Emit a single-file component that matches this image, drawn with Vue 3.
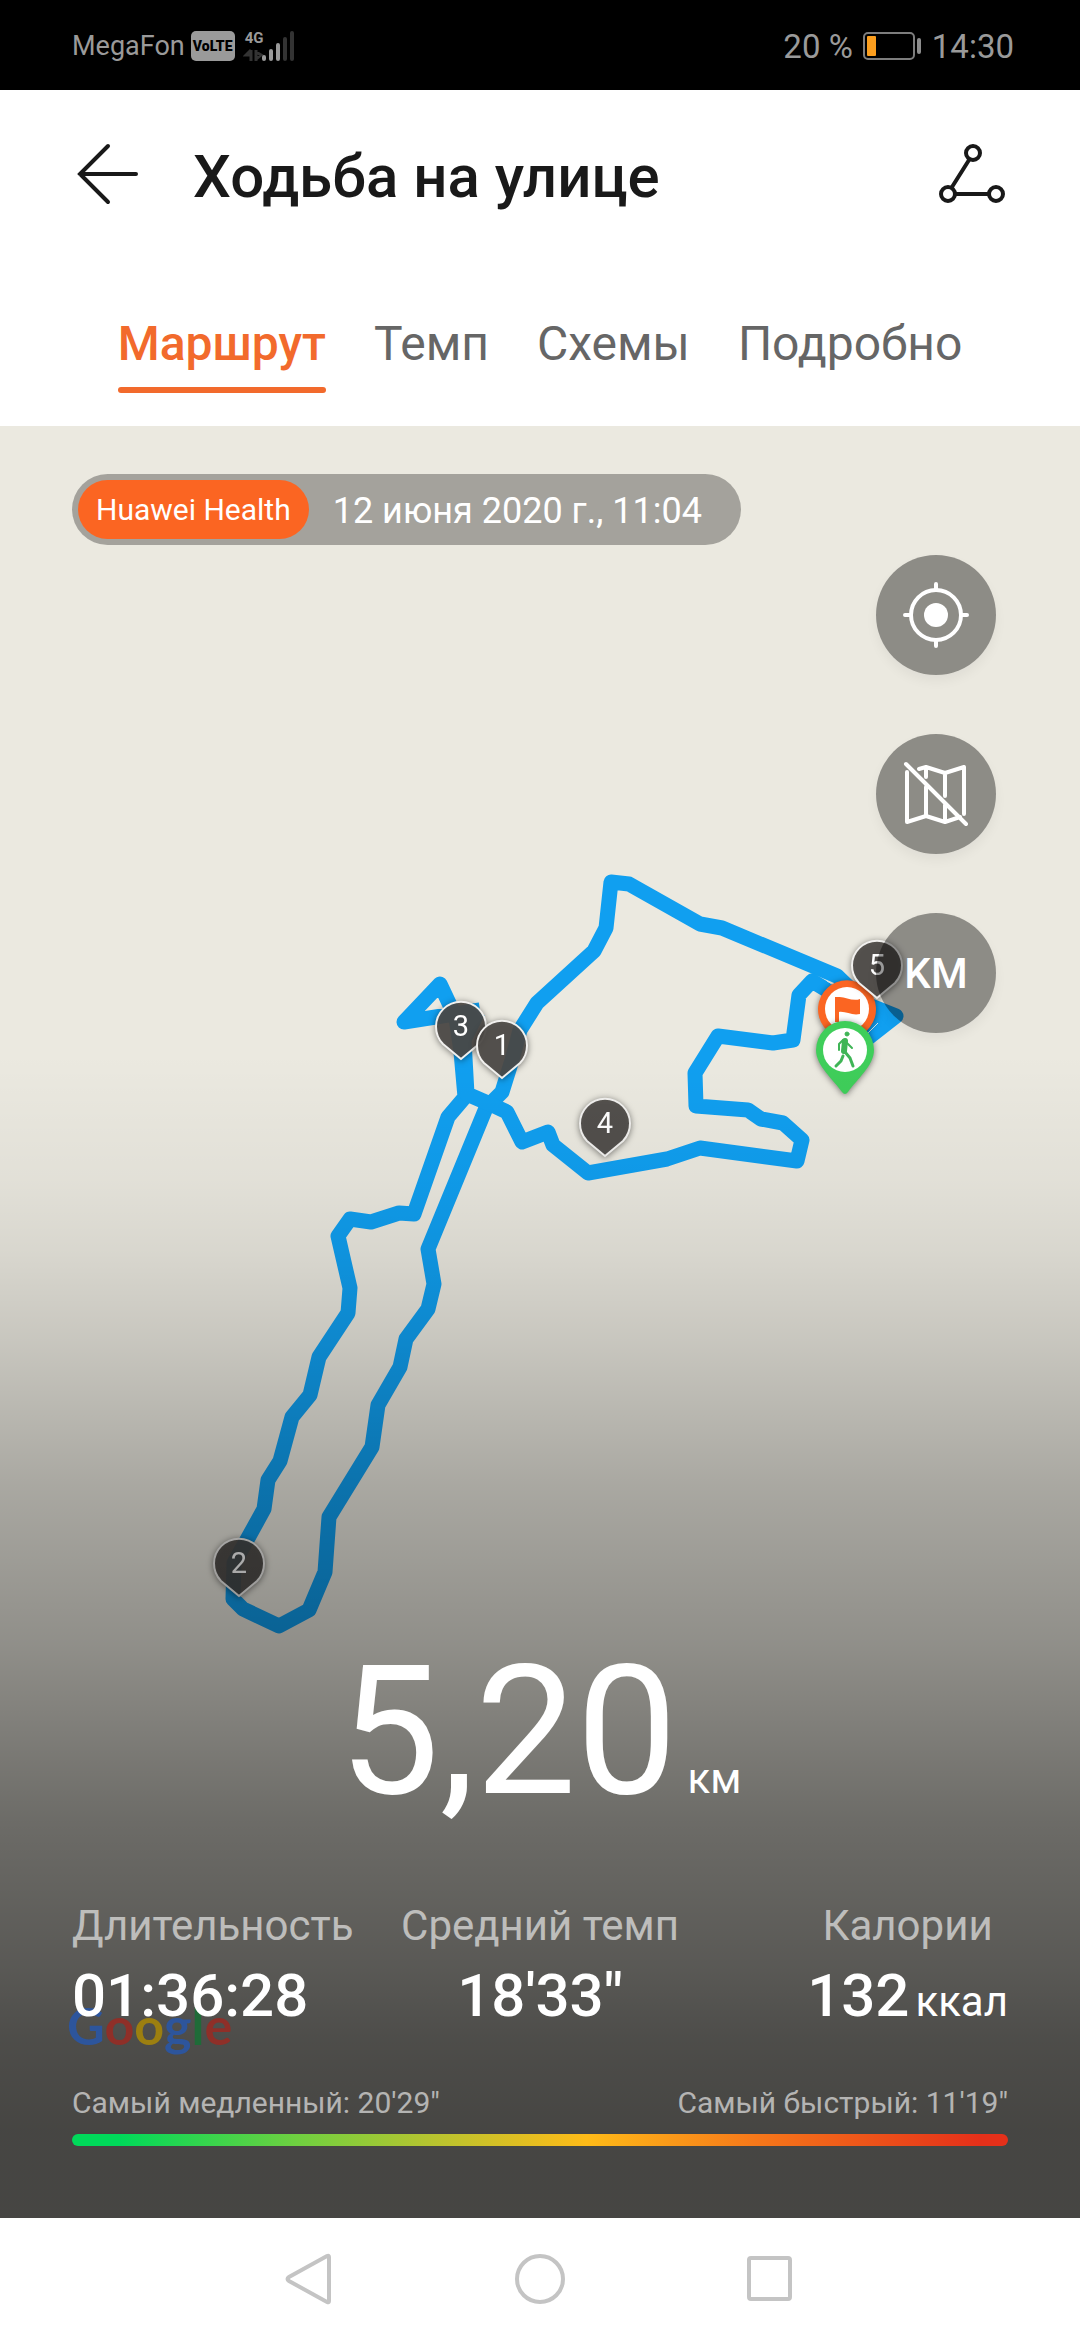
<template>
  <div class="page">
    <!-- status bar -->
    <div class="status-bar">
      <div class="status-left">
        <span class="carrier">MegaFon</span>
        <span class="volte">VoLTE</span>
        <div class="network">
          <span class="network-type">4G</span>
          <svg class="signal" width="52" height="32" viewBox="0 0 52 32">
            <path d="M8 20v11M8 20l-5 5h5M13 20v11M13 29l5-4-5-3" stroke="#333" stroke-width="3" fill="none" />
            <g stroke-width="4" stroke-linecap="round">
              <path d="M21 27v2M28 21v8M35 15v14" stroke="#9a9a9a" />
              <path d="M42 9v20M49 3v26" stroke="#333" />
            </g>
          </svg>
        </div>
      </div>
      <div class="status-right">
        <span>20 %</span>
        <svg width="59" height="28" viewBox="0 0 59 28">
          <rect x="1" y="1" width="50" height="26" rx="4" fill="none" stroke="#7d7d7d" stroke-width="2" />
          <rect x="4" y="4" width="9" height="20" rx="1" fill="#fb9e1e" />
          <rect x="54" y="6" width="4" height="16" rx="2" fill="#8d8d8d" />
        </svg>
        <span>14:30</span>
      </div>
    </div>

    <!-- header -->
    <header class="header">
      <button class="icon-button" type="button" aria-label="Назад">
        <svg width="62" height="62" viewBox="0 0 62 62" class="line-icon">
          <path d="M31 3L3 31L31 59M3 31H59" />
        </svg>
      </button>
      <h1 class="title">Ходьба на улице</h1>
      <button class="icon-button" type="button" aria-label="Поделиться">
        <svg width="68" height="62" viewBox="0 0 68 62" class="line-icon">
          <circle cx="35" cy="10" r="7" />
          <circle cx="10" cy="51" r="7" />
          <circle cx="58" cy="51" r="7" />
          <path d="M31 17L14 44M17 51H51" />
        </svg>
      </button>
    </header>

    <nav class="tabs" role="tablist">
      <button
        v-for="tab in tabs"
        :key="tab"
        class="tab"
        :class="{ active: tab === activeTab }"
        type="button"
        role="tab"
        :aria-selected="tab === activeTab"
        @click="activeTab = tab"
      >
        {{ tab }}
      </button>
    </nav>

    <main class="map">
      <svg class="map-canvas" viewBox="0 426 1080 1792" preserveAspectRatio="xMidYMin slice">
        <g class="route">
          <polyline v-for="(line, i) in route" :key="i" :points="line" />
        </g>
        <path d="M827 981L832 984M868 1033L878 1023" stroke="#dcecf0" stroke-width="1" />

        <!-- finish -->
        <g class="pin" transform="translate(847 1053)">
          <path d="M0 0L-23 -26A29 29 0 1 1 23 -26Z" fill="#fb6522" />
          <circle cx="0" cy="-44" r="22" fill="#fff" />
          <path d="M-12 -56h3c7-1 14 5 22 2v15c-8 2-14-3-21-2v10h-4z" fill="#fb6522" />
        </g>

        <g v-for="pin in kmPins" :key="pin.km" class="pin" :transform="`translate(${pin.x} ${pin.y})`">
          <path d="M0 -1L-18 -16A25 25 0 1 1 18 -16Z" class="km-pin" />
          <text x="0" y="-24" class="km-label">{{ pin.km }}</text>
        </g>

        <!-- start -->
        <g class="pin" transform="translate(845 1094)">
          <path d="M-3 -2C-11 -14 -29 -28 -29 -44A29 29 0 1 1 29 -44C29 -28 11 -14 3 -2Q0 2 -3 -2Z" fill="#3fce5a" />
          <circle cx="0" cy="-44" r="22" fill="#fff" />
          <g stroke="#3fb556" fill="none" stroke-linecap="round" stroke-linejoin="round">
            <circle cx="2" cy="-60" r="2" fill="#3fb556" stroke-width="1" />
            <path d="M0 -53L-1 -43" stroke-width="6" />
            <path d="M-2 -54L-6 -50V-44M2 -51L7 -46" stroke-width="2" />
            <path d="M0 -42L5 -36L8 -28M-2 -38L-4 -33L-9 -28" stroke-width="3" />
          </g>
        </g>
      </svg>
      <div class="scrim"></div>

      <div class="source">
        <span class="source-name">Huawei Health</span>
        <time class="source-date" datetime="2020-06-12T11:04">12 июня 2020 г., 11:04</time>
      </div>

      <div class="map-tools">
        <button class="tool" type="button" aria-label="Моё местоположение">
          <svg width="120" height="120" viewBox="0 0 120 120" class="tool-icon">
            <circle cx="60" cy="60" r="25" />
            <path d="M60 29v6M60 85v6M29 60h6M85 60h6" />
            <circle cx="60" cy="60" r="12" class="dot" />
          </svg>
        </button>
        <button class="tool" type="button" aria-label="Скрыть карту">
          <svg width="120" height="120" viewBox="0 0 120 120" class="tool-icon">
            <path d="M31 38V88L50 82L69 88L84 83M43 35L50 33L69 39L88 33V80M50 33V43M50 53V82M69 39V62M69 71V88M30 30L90 90" />
          </svg>
        </button>
        <button class="tool" type="button">KM</button>
      </div>

      <section class="summary">
        <div class="distance">
          <span class="distance-value">5,20</span>
          <span class="unit">км</span>
        </div>

        <div class="stats">
          <div class="stat">
            <span class="stat-label">Длительность</span>
            <span class="stat-value">01:36:28</span>
            <svg class="google" width="190" height="70" viewBox="0 0 190 70" aria-label="Google">
              <text x="0" y="50"><tspan v-for="(l, i) in logo" :key="i" :fill="l.color">{{ l.char }}</tspan></text>
            </svg>
          </div>
          <div class="stat">
            <span class="stat-label">Средний темп</span>
            <span class="stat-value">18'33"</span>
          </div>
          <div class="stat">
            <span class="stat-label">Калории</span>
            <span class="stat-value">132<span class="unit">ккал</span></span>
          </div>
        </div>

        <div class="pace-range">
          <span>Самый медленный: 20'29"</span>
          <span>Самый быстрый: 11'19"</span>
        </div>
        <div class="pace-bar"></div>
      </section>
    </main>

    <!-- system navigation -->
    <footer class="nav-bar">
      <button class="nav-button" type="button" aria-label="Назад">
        <svg width="52" height="52" viewBox="0 0 52 52"><path d="M45 4V48Q45 50 43 49L5 28Q2 26 5 24L43 3Q45 2 45 4Z" /></svg>
      </button>
      <button class="nav-button" type="button" aria-label="Домой">
        <svg width="52" height="52" viewBox="0 0 52 52"><circle cx="26" cy="26" r="23" /></svg>
      </button>
      <button class="nav-button" type="button" aria-label="Недавние">
        <svg width="52" height="52" viewBox="0 0 52 52"><rect x="5" y="5" width="41" height="41" rx="2" /></svg>
      </button>
    </footer>
  </div>
</template>

<script setup>
import { ref } from 'vue'

const tabs = ['Маршрут', 'Темп', 'Схемы', 'Подробно']
const activeTab = ref('Маршрут')

const route = [
  // outbound: north edge, down to the south loop and back up to km 3
  '850,1052 896,1016 866,1004 837,976 722,928 700,924 629,884 611,882 606,928 594,951 537,1003 520,1030 512,1060 502,1092 486,1108 428,1249 434,1284 428,1309 406,1339 400,1367 378,1405 372,1447 329,1517 325,1572 309,1610 279,1626 243,1609 233,1599 234,1563 248,1538 264,1509 268,1480 280,1461 292,1417 310,1395 319,1357 348,1313 350,1288 338,1236 350,1219 371,1222 399,1213 414,1214 448,1117 465,1097 461,1052 456,1018 440,984 404,1022 480,1010',
  // return leg
  '478,1012 464,1040 467,1094 490,1104 507,1112 522,1142 548,1132 553,1145 588,1173 667,1159 700,1148 797,1161 802,1140 783,1123 761,1119 748,1110 696,1106 695,1073 718,1036 773,1043 793,1040 799,995 812,981 840,998 880,1018 850,1042'
]

const kmPins = [
  { km: 3, x: 461, y: 1060 },
  { km: 1, x: 502, y: 1079 },
  { km: 4, x: 605, y: 1157 },
  { km: 5, x: 877, y: 999 },
  { km: 2, x: 239, y: 1597 }
]

const logo = [
  { char: 'G', color: '#2d559c' },
  { char: 'o', color: '#8f2f28' },
  { char: 'o', color: '#9c7f10' },
  { char: 'g', color: '#2d559c' },
  { char: 'l', color: '#1f6b38' },
  { char: 'e', color: '#8f2f28' }
]
</script>

<style>
body {
  margin: 0;
  background: #fff;
}
</style>

<style scoped>
.page {
  display: flex;
  flex-direction: column;
  min-height: 100vh;
  background: #fff;
  font-family: Roboto, 'Noto Sans', sans-serif;
}

button {
  padding: 0;
  border: none;
  background: none;
  font-family: inherit;
  cursor: pointer;
}

svg {
  display: block;
}

.status-bar {
  display: flex;
  justify-content: space-between;
  align-items: center;
  height: 90px;
  padding: 2px 66px 0 72px;
  box-sizing: border-box;
  background: #000;
  color: #9a9a9a;
}

.status-left {
  display: flex;
  align-items: center;
  gap: 6px;
}

.carrier {
  font-size: 27px;
}

.volte {
  width: 44px;
  border-radius: 5px;
  background: #9a9a9a;
  color: #000;
  font-size: 14px;
  font-weight: 900;
  line-height: 30px;
  text-align: center;
}

.network {
  position: relative;
  margin-left: 2px;
}

.network-type {
  position: absolute;
  top: 0;
  left: 2px;
  font-size: 15px;
  font-weight: 700;
  line-height: 16px;
}

.status-right {
  display: flex;
  align-items: center;
  gap: 10px;
  font-size: 33px;
}

.header {
  display: flex;
  align-items: center;
  height: 168px;
  padding: 0 74px 0 77px;
}

.icon-button {
  flex: none;
}

.line-icon {
  fill: none;
  stroke: #191919;
  stroke-width: 4;
  stroke-linecap: round;
}

.title {
  flex: 1;
  margin: 0 0 0 54px;
  padding-top: 5px;
  color: #191919;
  font-size: 60px;
  font-weight: 500;
  line-height: 72px;
}

.tabs {
  display: flex;
  justify-content: center;
  gap: 48px;
  padding: 58px 24px 33px;
}

.tab {
  position: relative;
  padding-bottom: 21px;
  color: #666;
  font-size: 48px;
  line-height: 56px;
}

.tab.active {
  color: #f26a2c;
  font-weight: 500;
}

.tab.active::after {
  content: '';
  position: absolute;
  right: 0;
  bottom: 0;
  left: 0;
  height: 6px;
  border-radius: 3px;
  background: #f26a2c;
}

.map {
  position: relative;
  display: flex;
  flex: 1;
  flex-direction: column;
  padding: 48px 72px 72px;
  background: #ebe9e0;
  overflow: hidden;
}

.map-canvas,
.scrim {
  position: absolute;
  inset: 0;
  width: 100%;
  height: 100%;
}

.scrim {
  background: linear-gradient(
    rgba(0, 0, 0, 0) 35%,
    rgba(0, 0, 0, 0.04) 42%,
    rgba(0, 0, 0, 0.08) 46%,
    rgba(0, 0, 0, 0.15) 51%,
    rgba(0, 0, 0, 0.28) 59%,
    rgba(0, 0, 0, 0.39) 68%,
    rgba(0, 0, 0, 0.54) 78%,
    rgba(0, 0, 0, 0.62) 86%,
    rgba(0, 0, 0, 0.67) 90%,
    rgba(0, 0, 0, 0.7) 95%
  );
}

.route {
  fill: none;
  stroke: #109ff0;
  stroke-width: 15;
  stroke-linejoin: round;
}

.pin {
  filter: drop-shadow(0 1px 3px rgba(0, 0, 0, 0.5));
}

.km-pin {
  fill: rgba(76, 73, 70, 0.9);
  stroke: #f1f0ee;
  stroke-width: 2;
}

.km-label {
  fill: #fff;
  font-size: 29px;
  text-anchor: middle;
}

.source {
  position: relative;
  display: flex;
  align-items: center;
  align-self: flex-start;
  padding: 6px 39px 6px 6px;
  border-radius: 36px;
  background: rgba(0, 0, 0, 0.3);
  color: #fff;
}

.source-name {
  padding: 0 18px;
  border-radius: 30px;
  background: #fb6522;
  font-size: 30px;
  line-height: 59px;
}

.source-date {
  margin-left: 24px;
  padding-top: 3px;
  font-size: 36px;
}

.map-tools {
  position: relative;
  display: flex;
  flex-direction: column;
  align-self: flex-end;
  gap: 59px;
  margin: 10px 12px 0 0;
}

.tool {
  width: 120px;
  height: 120px;
  border-radius: 50%;
  background: rgba(0, 0, 0, 0.4);
  box-shadow: 0 6px 12px rgba(0, 0, 0, 0.05);
  color: #fff;
  font-size: 42px;
  font-weight: 500;
}

.tool-icon {
  fill: none;
  stroke: #fff;
  stroke-width: 4;
  stroke-linecap: round;
  stroke-linejoin: round;
}

.dot {
  fill: #fff;
  stroke: none;
}

.summary {
  position: relative;
  margin-top: auto;
  color: #fff;
}

.distance {
  display: flex;
  justify-content: center;
  align-items: baseline;
  gap: 10px;
}

.distance-value {
  font-size: 180px;
  line-height: 180px;
}

.unit {
  font-size: 42px;
  font-weight: 400;
  line-height: 48px;
}

.stats {
  display: grid;
  grid-template-columns: 1fr auto 1fr;
  margin-top: 80px;
}

.stat {
  position: relative;
  display: flex;
  flex-direction: column;
  align-items: center;
  gap: 10px;
}

.stat:first-child {
  align-items: flex-start;
}

.stat:last-child {
  justify-self: end;
}

.stat-label {
  color: rgba(255, 255, 255, 0.6);
  font-size: 42px;
  line-height: 48px;
}

.stat-value {
  position: relative;
  z-index: 1;
  font-size: 60px;
  font-weight: 500;
  line-height: 72px;
}

.stat-value .unit {
  margin-left: 6px;
}

/* map attribution, sits behind the duration */
.google {
  position: absolute;
  bottom: -33px;
  left: -5px;
  font-family: Lato, sans-serif;
  font-size: 52px;
  font-weight: 700;
}

.pace-range {
  display: flex;
  justify-content: space-between;
  margin-top: 53px;
  color: rgba(255, 255, 255, 0.6);
  font-size: 30px;
  line-height: 36px;
}

.pace-bar {
  height: 12px;
  margin-top: 13px;
  border-radius: 6px;
  background: linear-gradient(
    90deg,
    #00d95a 5%,
    #6fd040 24%,
    #b5c430 38%,
    #ffbb18 55%,
    #f6781a 73%,
    #e5301a 97%
  );
}

.nav-bar {
  display: flex;
  justify-content: center;
  height: 122px;
  background: #fff;
}

.nav-button {
  display: flex;
  flex: 0 1 230px;
  justify-content: center;
  align-items: center;
}

.nav-button svg {
  fill: none;
  stroke: #c4c4c4;
  stroke-width: 4;
}
</style>
